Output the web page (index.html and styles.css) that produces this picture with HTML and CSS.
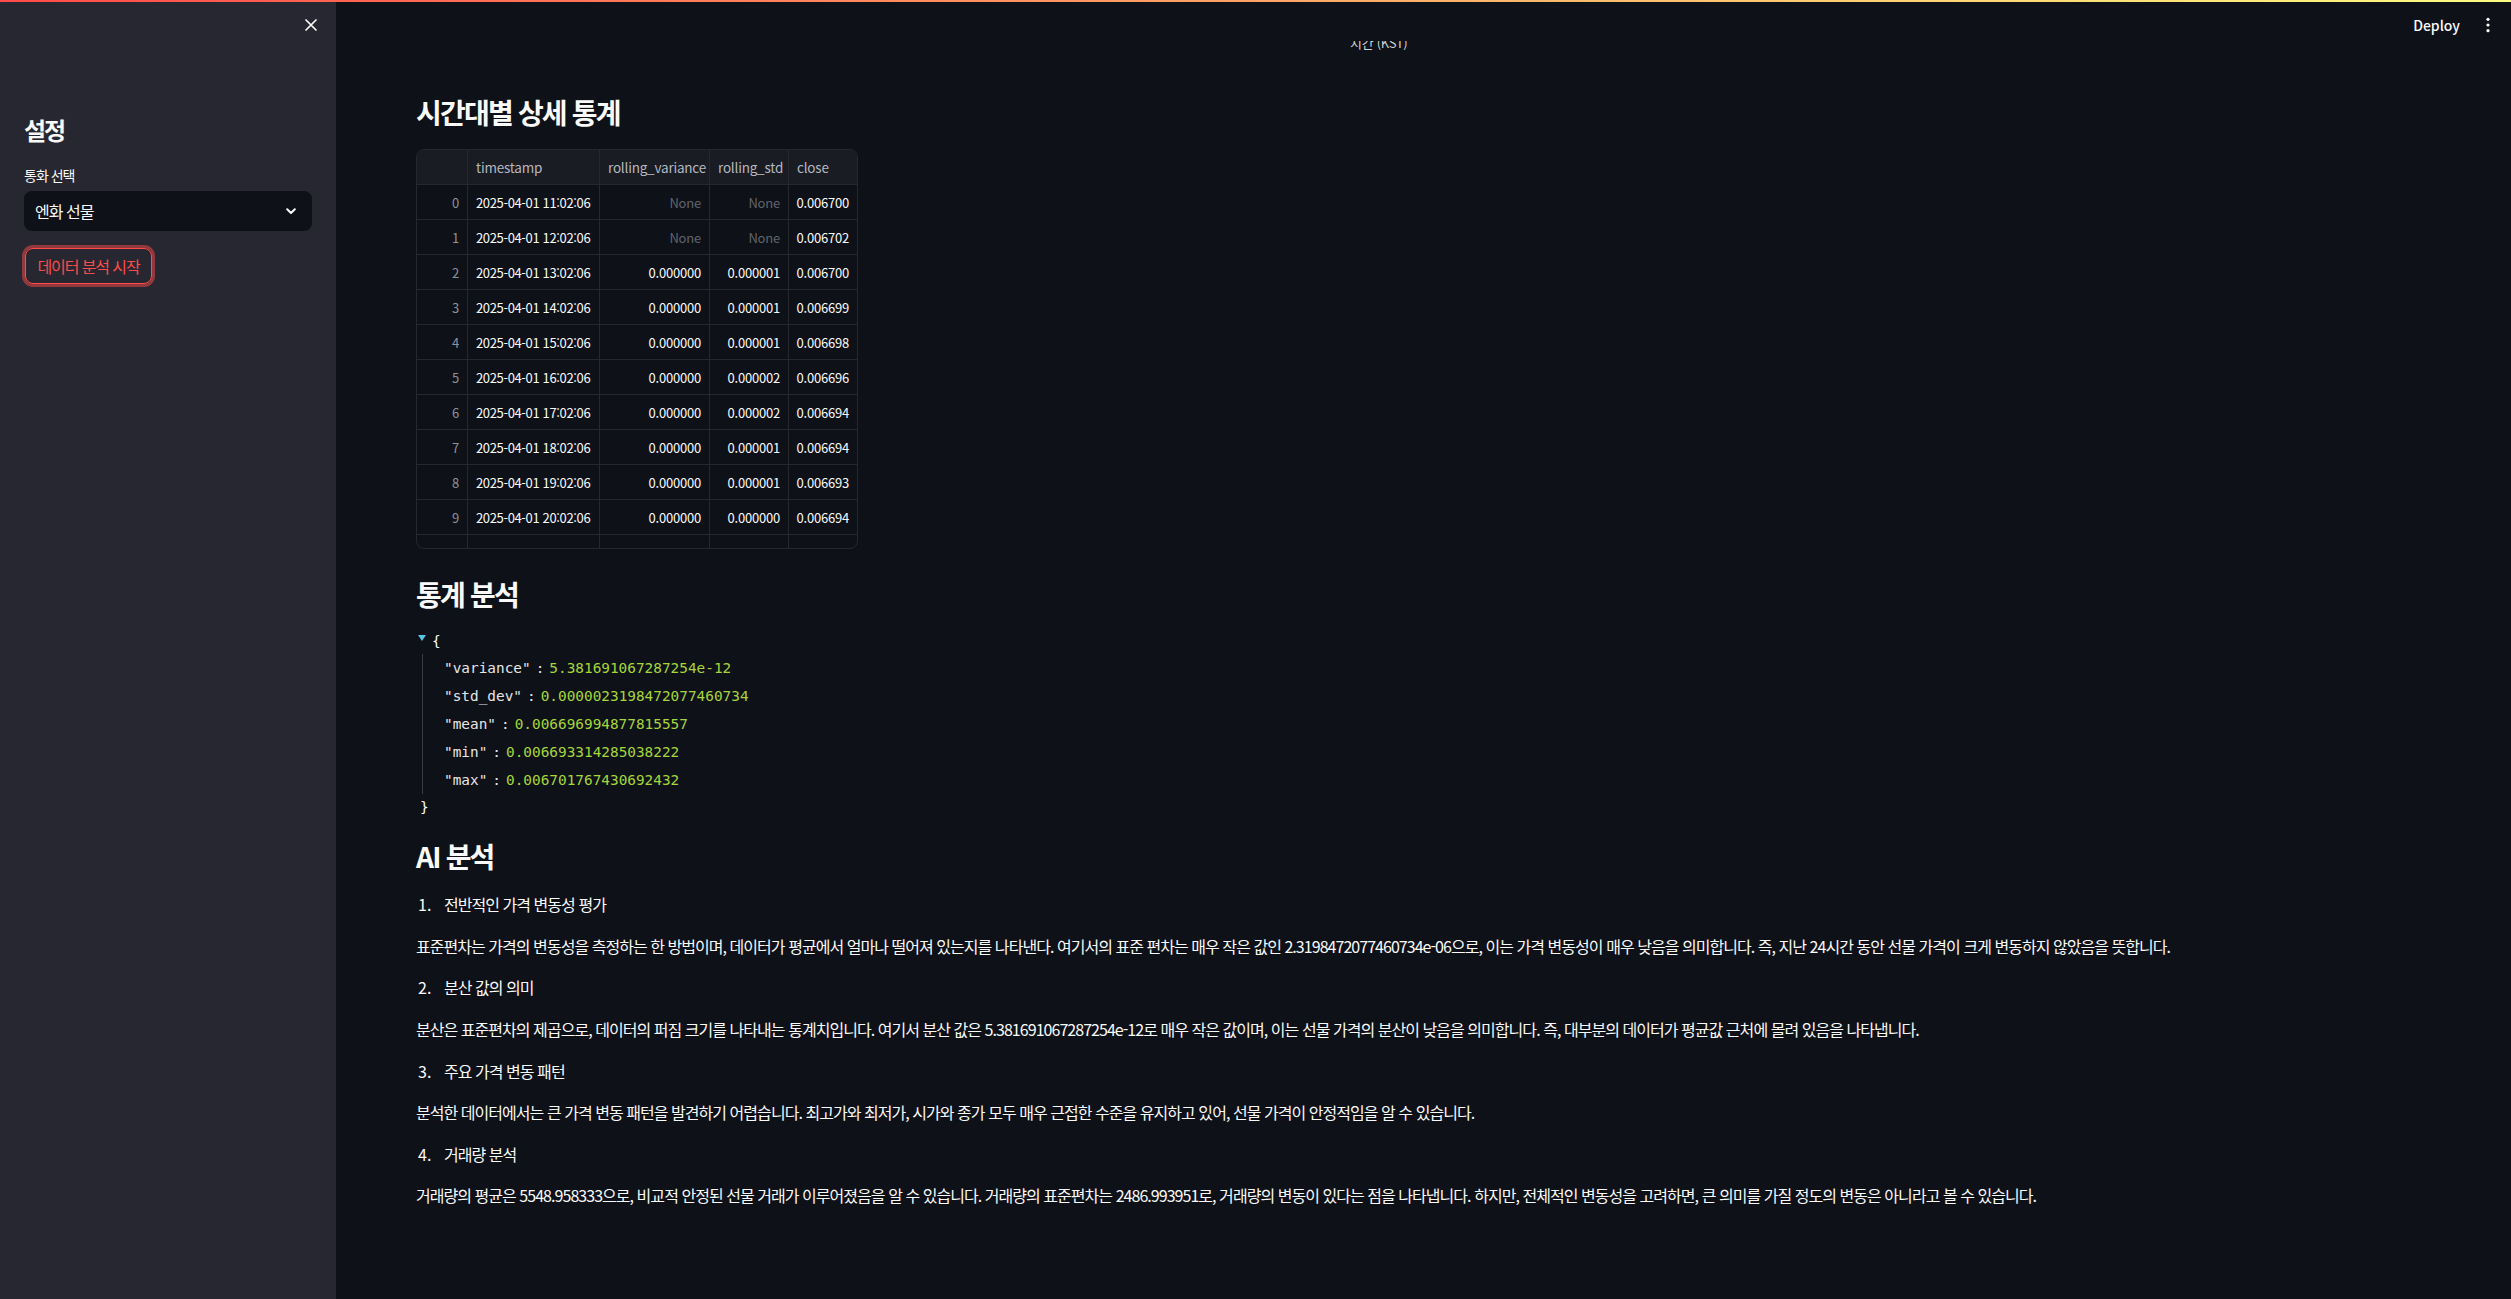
FILE: index.html
```html
<!DOCTYPE html>
<html lang="ko">
<head>
<meta charset="utf-8">
<title>분석</title>
<link rel="stylesheet" href="styles.css">
</head>
<body>
<div class="decoration"></div>
<div class="app">
  <aside class="sidebar">
    <div class="sb-top">
      <span class="close-btn">
        <svg width="12" height="12" viewBox="0 0 12 12"><path d="M1 1 L11 11 M11 1 L1 11" stroke="#fafafa" stroke-width="1.7" stroke-linecap="round"/></svg>
      </span>
    </div>
    <div class="sb-content">
      <h2 class="sb-title">설정</h2>
      <div class="sb-label">통화 선택</div>
      <div class="select">
        <span class="select-value">엔화 선물</span>
        <svg class="chev" width="10" height="7" viewBox="0 0 10 7"><path d="M1.2 1.3 L5 5 L8.8 1.3" fill="none" stroke="#fafafa" stroke-width="2" stroke-linecap="round" stroke-linejoin="round"/></svg>
      </div>
      <button class="run-btn">데이터 분석 시작</button>
    </div>
  </aside>
  <main class="main">
    <header class="topbar">
      <span class="deploy">Deploy</span>
      <svg class="menu" width="4" height="16" viewBox="0 0 4 16"><circle cx="2" cy="2.3" r="1.6" fill="#fafafa"/><circle cx="2" cy="8" r="1.6" fill="#fafafa"/><circle cx="2" cy="13.7" r="1.6" fill="#fafafa"/></svg>
    </header>
    <div class="block">
      <div class="chart-tail"><div class="chart-tail-text">시간 (KST)</div></div>

      <h3 class="h3 h3-first">시간대별 상세 통계</h3>

      <div class="grid">
        <div class="c hd"></div><div class="c hd">timestamp</div><div class="c hd">rolling_variance</div><div class="c hd">rolling_std</div><div class="c hd last">close</div>

        <div class="c idx">0</div><div class="c ts">2025-04-01 11:02:06</div><div class="c num none">None</div><div class="c num none">None</div><div class="c num last">0.006700</div>
        <div class="c idx">1</div><div class="c ts">2025-04-01 12:02:06</div><div class="c num none">None</div><div class="c num none">None</div><div class="c num last">0.006702</div>
        <div class="c idx">2</div><div class="c ts">2025-04-01 13:02:06</div><div class="c num">0.000000</div><div class="c num">0.000001</div><div class="c num last">0.006700</div>
        <div class="c idx">3</div><div class="c ts">2025-04-01 14:02:06</div><div class="c num">0.000000</div><div class="c num">0.000001</div><div class="c num last">0.006699</div>
        <div class="c idx">4</div><div class="c ts">2025-04-01 15:02:06</div><div class="c num">0.000000</div><div class="c num">0.000001</div><div class="c num last">0.006698</div>
        <div class="c idx">5</div><div class="c ts">2025-04-01 16:02:06</div><div class="c num">0.000000</div><div class="c num">0.000002</div><div class="c num last">0.006696</div>
        <div class="c idx">6</div><div class="c ts">2025-04-01 17:02:06</div><div class="c num">0.000000</div><div class="c num">0.000002</div><div class="c num last">0.006694</div>
        <div class="c idx">7</div><div class="c ts">2025-04-01 18:02:06</div><div class="c num">0.000000</div><div class="c num">0.000001</div><div class="c num last">0.006694</div>
        <div class="c idx">8</div><div class="c ts">2025-04-01 19:02:06</div><div class="c num">0.000000</div><div class="c num">0.000001</div><div class="c num last">0.006693</div>
        <div class="c idx">9</div><div class="c ts">2025-04-01 20:02:06</div><div class="c num">0.000000</div><div class="c num">0.000000</div><div class="c num last">0.006694</div>
        <div class="c idx"></div><div class="c"></div><div class="c num"></div><div class="c num"></div><div class="c num last"></div>
      </div>

      <h3 class="h3 h3-second">통계 분석</h3>

      <div class="json">
        <div class="json-open"><span class="caret"></span><span class="brace">{</span></div>
        <div class="json-body">
          <div class="json-row"><span class="k">"variance"</span><span class="colon">:</span><span class="v">5.381691067287254e-12</span></div>
          <div class="json-row"><span class="k">"std_dev"</span><span class="colon">:</span><span class="v">0.0000023198472077460734</span></div>
          <div class="json-row"><span class="k">"mean"</span><span class="colon">:</span><span class="v">0.006696994877815557</span></div>
          <div class="json-row"><span class="k">"min"</span><span class="colon">:</span><span class="v">0.006693314285038222</span></div>
          <div class="json-row"><span class="k">"max"</span><span class="colon">:</span><span class="v">0.006701767430692432</span></div>
        </div>
        <div class="json-close">}</div>
      </div>

      <h3 class="h3 h3-third">AI 분석</h3>

      <div class="md">
        <ol class="item" start="1"><li>전반적인 가격 변동성 평가</li></ol>
        <p>표준편차는 가격의 변동성을 측정하는 한 방법이며, 데이터가 평균에서 얼마나 떨어져 있는지를 나타낸다. 여기서의 표준 편차는 매우 작은 값인 2.3198472077460734e-06으로, 이는 가격 변동성이 매우 낮음을 의미합니다. 즉, 지난 24시간 동안 선물 가격이 크게 변동하지 않았음을 뜻합니다.</p>
        <ol class="item" start="2"><li>분산 값의 의미</li></ol>
        <p>분산은 표준편차의 제곱으로, 데이터의 퍼짐 크기를 나타내는 통계치입니다. 여기서 분산 값은 5.381691067287254e-12로 매우 작은 값이며, 이는 선물 가격의 분산이 낮음을 의미합니다. 즉, 대부분의 데이터가 평균값 근처에 몰려 있음을 나타냅니다.</p>
        <ol class="item" start="3"><li>주요 가격 변동 패턴</li></ol>
        <p>분석한 데이터에서는 큰 가격 변동 패턴을 발견하기 어렵습니다. 최고가와 최저가, 시가와 종가 모두 매우 근접한 수준을 유지하고 있어, 선물 가격이 안정적임을 알 수 있습니다.</p>
        <ol class="item" start="4"><li>거래량 분석</li></ol>
        <p>거래량의 평균은 5548.958333으로, 비교적 안정된 선물 거래가 이루어졌음을 알 수 있습니다. 거래량의 표준편차는 2486.993951로, 거래량의 변동이 있다는 점을 나타냅니다. 하지만, 전체적인 변동성을 고려하면, 큰 의미를 가질 정도의 변동은 아니라고 볼 수 있습니다.</p>
      </div>
    </div>
  </main>
</div>
</body>
</html>
```
FILE: styles.css
```css
* { box-sizing: border-box; margin: 0; padding: 0; }

html, body { height: 100%; }

body {
  background: #0e1117;
  color: #fafafa;
  font-family: "Noto Sans CJK KR", "Noto Sans", sans-serif;
  overflow: hidden;
}

.decoration {
  height: 2px;
  background: linear-gradient(90deg, #ff4b4b, #fffd80);
}

.app {
  display: flex;
  height: 1297px;
}

/* ---------- sidebar ---------- */
.sidebar {
  width: 336px;
  flex: none;
  background: #262730;
}

.sb-top {
  height: 46px;
  display: flex;
  justify-content: flex-end;
  align-items: center;
  padding-right: 19px;
}

.close-btn { display: flex; width: 12px; height: 12px; }

.sb-content {
  padding: 0 24px;
  display: flex;
  flex-direction: column;
  align-items: flex-start;
}

.sb-title {
  margin-top: 68px;
  font-size: 24px;
  line-height: 28px;
  font-weight: 700;
  letter-spacing: -2px;
}

.sb-label {
  margin-top: 21px;
  font-size: 14px;
  line-height: 20px;
  letter-spacing: -1px;
}

.select {
  margin-top: 6px;
  width: 288px;
  height: 40px;
  background: #0e1117;
  border-radius: 8px;
  display: flex;
  align-items: center;
  justify-content: space-between;
  padding: 0 16px 0 11px;
}

.select-value {
  font-size: 16px;
  letter-spacing: -1px;
  line-height: 20px;
}

.run-btn {
  margin-top: 17px;
  margin-left: 1px;
  width: 127px;
  height: 36px;
  border: 1px solid #ff4b4b;
  border-radius: 8px;
  background: transparent;
  box-shadow: 0 0 0 3px rgba(255, 75, 75, 0.5);
  color: #ff4b4b;
  font-family: inherit;
  font-size: 16px;
  letter-spacing: -1.1px;
}

/* ---------- main ---------- */
.main {
  flex: 1;
  min-width: 0;
  display: flex;
  flex-direction: column;
}

.topbar {
  height: 39px;
  display: flex;
  justify-content: flex-end;
  align-items: flex-start;
  padding: 13px 21px 0 0;
  gap: 26px;
}

.deploy {
  font-size: 14px;
  line-height: 20px;
  font-weight: 500;
}

.menu { margin-top: 2px; }

.block {
  padding: 0 80px;
}

.chart-tail {
  height: 10px;
  overflow: hidden;
  padding-left: 934px;
}

.chart-tail-text {
  margin-top: -6px;
  font-size: 13px;
  line-height: 16px;
  color: #cfd0d4;
  letter-spacing: -0.3px;
}

.h3 {
  font-size: 28px;
  line-height: 32.4px;
  font-weight: 700;
  letter-spacing: -1.8px;
}

.h3-first { margin-top: 45px; }
.h3-second { margin-top: 29px; }
.h3-third { margin-top: 20px; }

/* ---------- data grid ---------- */
.grid {
  margin-top: 21px;
  width: 442px;
  height: 400px;
  border: 1px solid #26282e;
  border-radius: 8px;
  overflow: hidden;
  display: grid;
  grid-template-columns: 51px 132px 110px 79px 68px;
  grid-auto-rows: 35px;
  font-size: 13px;
}

.c {
  border-right: 1px solid #26282e;
  border-bottom: 1px solid #26282e;
  display: flex;
  align-items: center;
  padding: 0 8px;
  white-space: nowrap;
  overflow: hidden;
  color: #fafafa;
  letter-spacing: -0.2px;
}

.c.ts {
  padding: 0 4px 0 8px;
  letter-spacing: -0.35px;
}

.c.last { border-right: none; }

.hd {
  background: #1a1c24;
  color: #b4b8c0;
  font-size: 13.5px;
}

.idx {
  justify-content: flex-end;
  color: #8d919a;
}

.num { justify-content: flex-end; }

.none { color: #60646c; }

/* ---------- json ---------- */
.json {
  margin-top: 17px;
  font-family: "DejaVu Sans Mono", "Liberation Mono", monospace;
  font-size: 14.4px;
}

.json-open {
  height: 26px;
  display: flex;
  align-items: center;
  padding-left: 2px;
}

.caret {
  width: 0;
  height: 0;
  border-left: 4.5px solid transparent;
  border-right: 4.5px solid transparent;
  border-top: 6px solid #55c4e0;
  margin-right: 6px;
  margin-top: -5px;
}

.brace { color: #fafafa; }

.json-body {
  margin-left: 6px;
  border-left: 1px solid #3b3d45;
  padding-left: 21px;
}

.json-row {
  height: 28px;
  display: flex;
  align-items: center;
  white-space: nowrap;
}

.k { color: #e6e6e6; }
.colon { color: #e6e6e6; margin: 0 5px; }
.v { color: #a6d63a; }

.json-close {
  height: 26px;
  display: flex;
  align-items: center;
  padding-left: 4px;
}

/* ---------- markdown ---------- */
.md {
  margin-top: 20px;
  font-size: 16px;
  line-height: 25.6px;
  letter-spacing: -0.96px;
}

.md p { margin-bottom: 16px; white-space: nowrap; }

.item {
  margin-bottom: 16px;
  list-style: none;
}

.item li::before {
  content: counter(list-item) ".";
  box-sizing: border-box;
  display: inline-block;
  width: 28px;
  padding-left: 2px;
  letter-spacing: 0;
}
```
